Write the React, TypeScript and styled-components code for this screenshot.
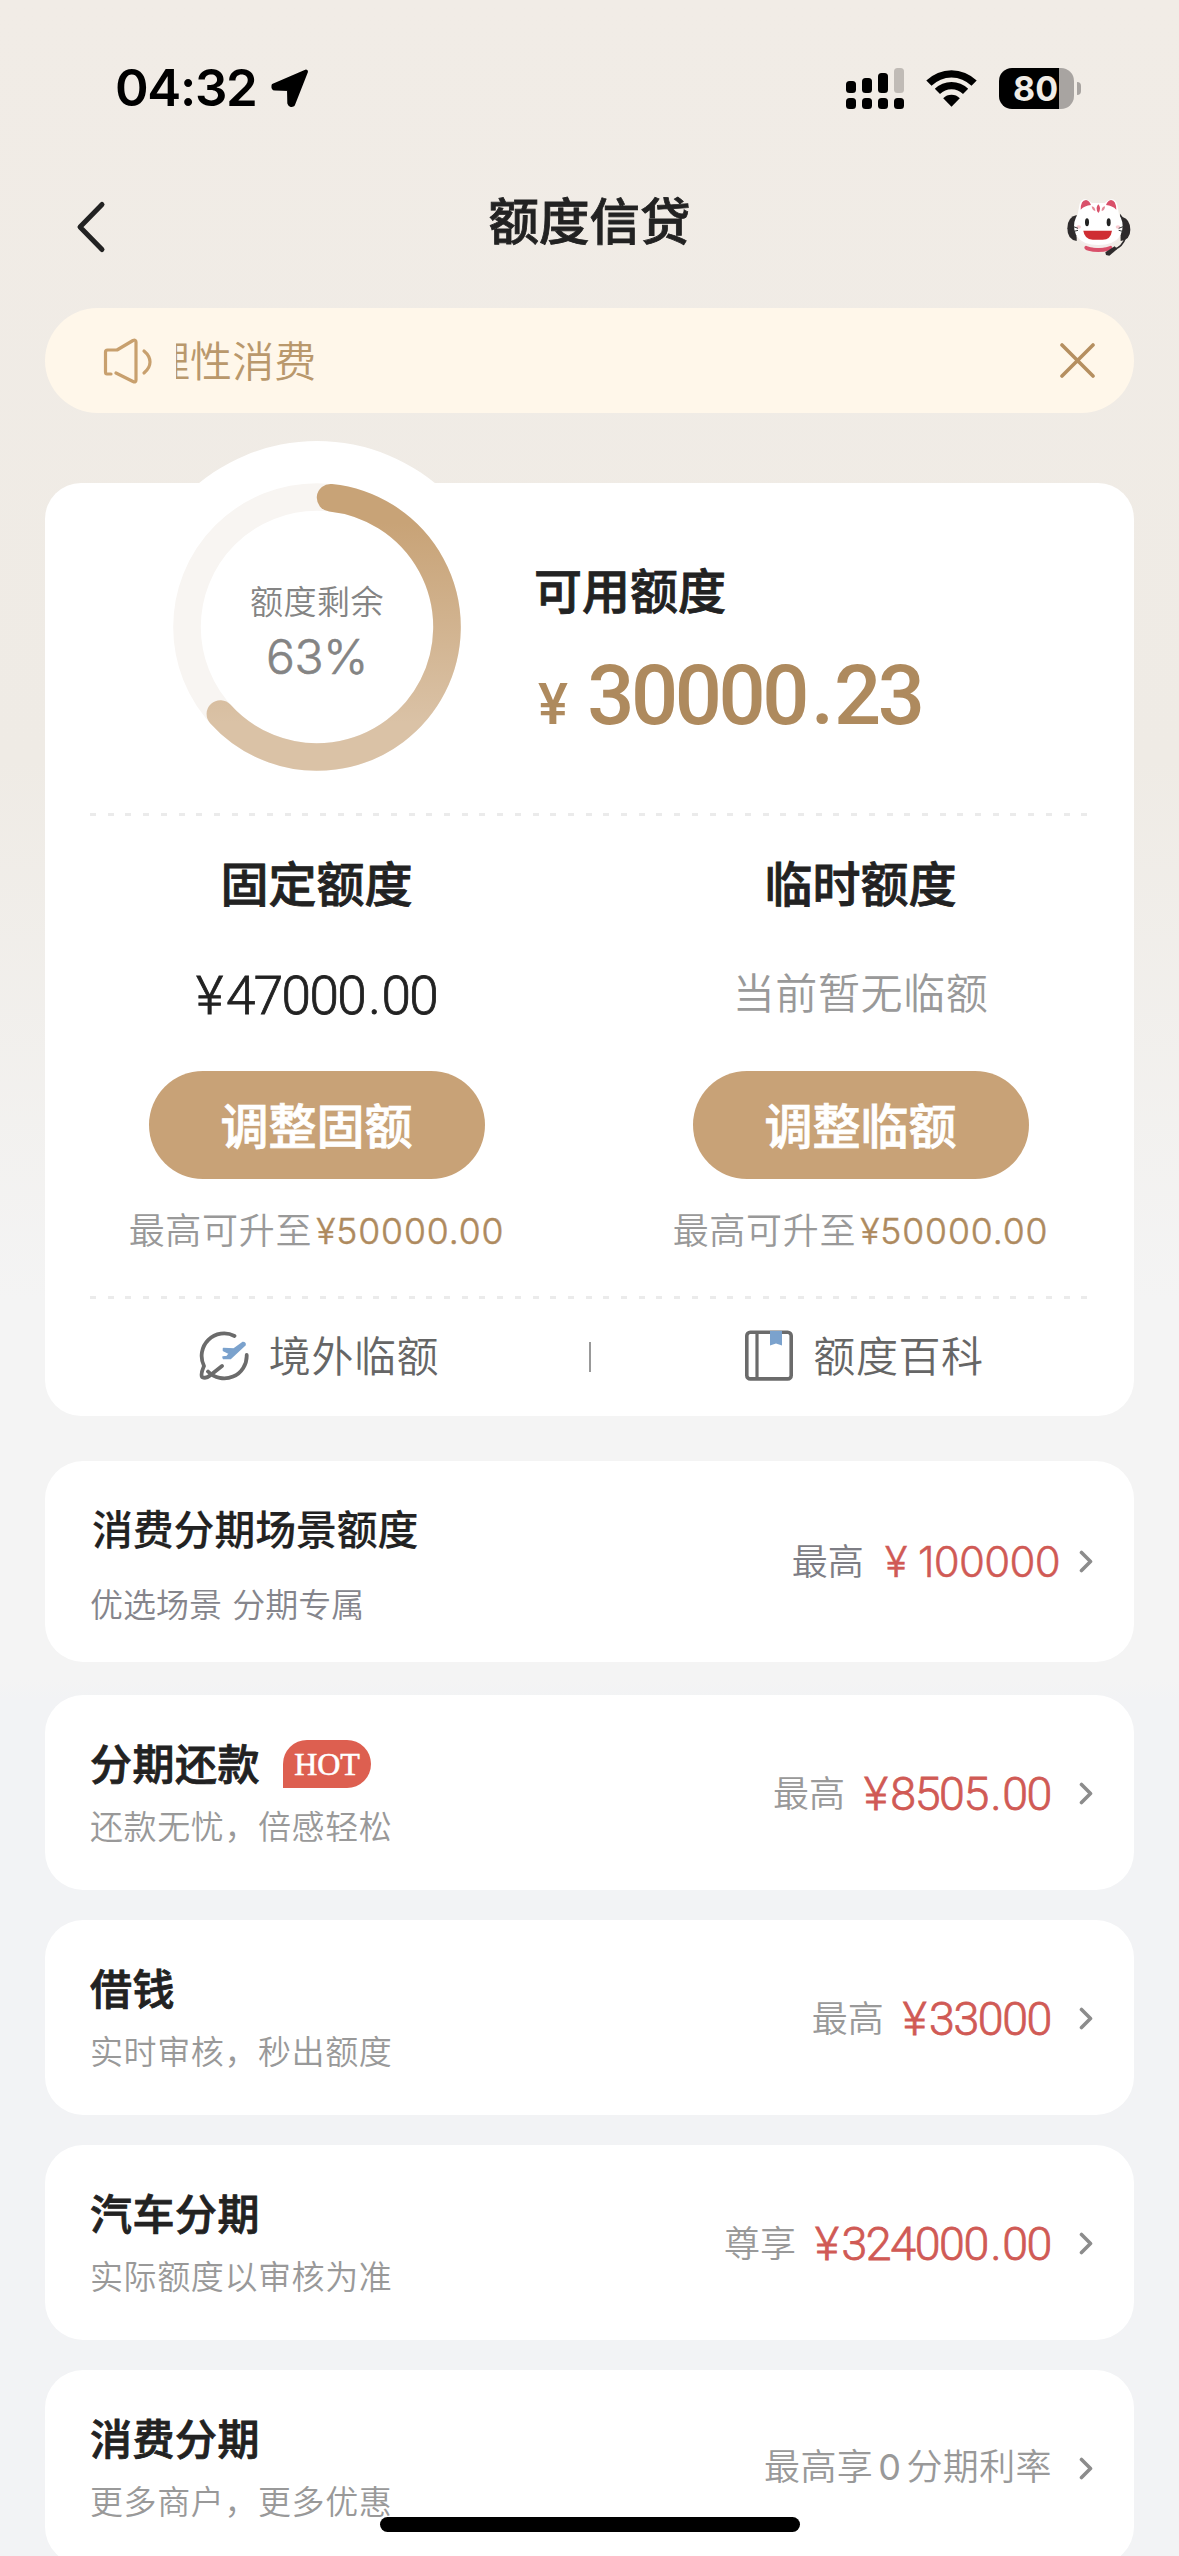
import React from "react";
import styled, { createGlobalStyle } from "styled-components";

const CJK = `"Noto Sans CJK SC", sans-serif`;
const LATIN = `Inter, "Noto Sans CJK SC", sans-serif`;
const DIGIT = `Roboto, "Noto Sans CJK SC", sans-serif`;

const GlobalStyle = createGlobalStyle`
  * { box-sizing: border-box; }
  body { margin: 0; background: #f2f3f5; font-family: ${CJK}; }
  h1, h2, h3, p { margin: 0; font-weight: inherit; }
  button { border: 0; padding: 0; background: none; font-family: inherit; }
  svg { display: block; flex: none; }
`;

const Screen = styled.main`
  position: relative;
  width: 1179px;
  height: 2556px;
  overflow: hidden;
  background: linear-gradient(180deg, #f1ece6 0, #efebe5 760px, #f4f4f4 1300px, #f4f4f4 1680px, #f2f3f5 1700px);
`;

const StatusBar = styled.div`
  height: 176px;
  padding: 0 98px 0 115px;
  display: flex;
  align-items: center;
  justify-content: space-between;
`;

const StatusGroup = styled.div<{ $gap: number }>`
  display: flex;
  align-items: center;
  gap: ${(p) => p.$gap}px;
`;

const Clock = styled.span`
  font: 600 51px/56px ${LATIN};
  letter-spacing: -1.3px;
  color: #000;
`;

const Battery = styled.div`
  display: flex;
  align-items: center;
  gap: 3px;
`;

const BatteryBody = styled.div`
  width: 75px;
  height: 41px;
  padding-left: 14px;
  border-radius: 13px;
  background: linear-gradient(90deg, #000 60px, #a8a4a1 60px);
  color: #f1ece6;
  font: 700 34px/41px ${LATIN};
`;

const BatteryNub = styled.div`
  width: 4px;
  height: 13px;
  border-radius: 0 4px 4px 0;
  background: #a8a4a1;
`;

const NavBar = styled.header`
  height: 102px;
  padding: 0 47px 0 75px;
  display: grid;
  grid-template-columns: 1fr auto 1fr;
  align-items: center;
`;

const NavTitle = styled.h1`
  padding: 0 28px 19px 0;
  font-size: 50.5px;
  line-height: 56px;
  font-weight: 500;
  -webkit-text-stroke: 0.8px currentColor;
  color: #222;
`;

const NavEnd = styled.div`
  justify-self: end;
`;

const Notice = styled.section`
  height: 105px;
  margin: 30px 45px 0;
  padding: 0 39px 0 58px;
  border-radius: 53px;
  background: #fff7ea;
  display: flex;
  align-items: center;
`;

const Marquee = styled.div`
  flex: 1;
  margin-left: 23px;
  overflow: hidden;
`;

const MarqueeText = styled.p`
  margin-left: -28px;
  padding-bottom: 3px;
  font-size: 42px;
  line-height: 56px;
  font-weight: 350;
  letter-spacing: 0.1px;
  color: #b9986c;
`;

const QuotaCard = styled.section`
  height: 933px;
  margin: 70px 45px 0;
  border-radius: 36px;
  background: #fff;
`;

const Hero = styled.div`
  height: 330px;
  padding-left: 86px;
  display: flex;
  align-items: flex-start;
`;

const RingDisc = styled.div`
  width: 372px;
  height: 372px;
  margin-top: -42px;
  border-radius: 50%;
  background: #fff;
  display: grid;
  place-items: center;
  > * { grid-area: 1 / 1; }
`;

const RingLabel = styled.div`
  padding-top: 9px;
  display: flex;
  flex-direction: column;
  align-items: center;
  color: #848484;
`;

const RingCaption = styled.span`
  font-size: 33px;
  line-height: 36px;
  font-weight: 350;
  letter-spacing: 0.5px;
`;

const RingPercent = styled.span`
  margin-top: 15px;
  font: 300 48px/48px ${LATIN};
  letter-spacing: -0.3px;
  -webkit-text-stroke: 0.6px currentColor;
`;

const Available = styled.div`
  padding: 81px 0 0 31px;
`;

const Heading = styled.h2`
  font-size: 48px;
  line-height: 48px;
  font-weight: 500;
  -webkit-text-stroke: 0.8px currentColor;
  color: #222;
`;

const Money = styled.span<{ $size: number; $color?: string; $big?: boolean }>`
  display: inline-flex;
  align-items: baseline;
  font-family: ${DIGIT};
  font-size: ${(p) => p.$size}px;
  font-weight: ${(p) => (p.$big ? 500 : 300)};
  line-height: 1.02;
  letter-spacing: ${(p) => (p.$big ? -0.041 : -0.03)}em;
  -webkit-text-stroke: ${(p) => (p.$big ? 0 : 0.8)}px currentColor;
  color: ${(p) => p.$color ?? "#d05a55"};
`;

const Yen = styled.span<{ $big?: boolean }>`
  font-size: ${(p) => (p.$big ? "0.68em" : "1em")};
  margin-right: ${(p) => (p.$big ? "0.4em" : "0.08em")};
`;

const Point = styled.span`
  padding: 0 0.04em 0 0.06em;
`;

const AvailableAmount = styled.div`
  margin: 42px 0 0 4px;
`;

const Dashes = styled.div`
  height: 3px;
  margin: 0 46px 0 45px;
  background: repeating-linear-gradient(90deg, #ebebeb 0 6px, transparent 6px 17.7px);
`;

const Columns = styled.div`
  display: grid;
  grid-template-columns: 543px 545px;
  height: 480px;
`;

const Column = styled.div`
  padding-top: 41px;
  display: flex;
  flex-direction: column;
  align-items: center;
`;

const ValueBox = styled.div<{ $drop?: boolean }>`
  height: 54px;
  margin-top: 62px;
  padding-top: ${(p) => (p.$drop ? 2 : 0)}px;
`;

const EmptyValue = styled.p`
  font-size: 42px;
  line-height: 48px;
  font-weight: 350;
  letter-spacing: 0.6px;
  color: #999;
`;

const PillButton = styled.button`
  width: 336px;
  height: 108px;
  margin-top: 50px;
  padding-bottom: 4px;
  border-radius: 54px;
  background: #c8a277;
  color: #fff;
  font-size: 48px;
  line-height: 54px;
  font-weight: 500;
  -webkit-text-stroke: 0.8px currentColor;
`;

const UpTo = styled.p`
  margin-top: 31px;
  display: flex;
  align-items: baseline;
  gap: 4px;
  font-size: 36px;
  line-height: 36px;
  font-weight: 350;
  letter-spacing: 0.7px;
  color: #999;
`;

const UpToAmount = styled.span`
  font: 300 35.5px/36px ${LATIN};
  letter-spacing: 0.9px;
  -webkit-text-stroke: 0.5px currentColor;
  color: #ae8a5e;
`;

const Links = styled.nav`
  height: 116px;
  display: grid;
  grid-template-columns: 544px 2px 543px;
  align-items: center;
  justify-items: center;
`;

const LinkItem = styled.div`
  padding: 0 0 3px 4px;
  display: flex;
  align-items: center;
  gap: 20px;
`;

const LinkText = styled.span`
  padding-bottom: 3px;
  font-size: 42px;
  line-height: 48px;
  font-weight: 350;
  letter-spacing: 0.6px;
  color: #666;
`;

const LinkDivider = styled.i`
  width: 2px;
  height: 30px;
  background: #999;
`;

const List = styled.div`
  margin: 45px 45px 0;
  display: flex;
  flex-direction: column;
`;

const Item = styled.article<{ $tall?: boolean }>`
  height: ${(p) => (p.$tall ? 201 : 195)}px;
  margin-bottom: ${(p) => (p.$tall ? 33 : 30)}px;
  padding: 46px 41px 0 45px;
  border-radius: 38px;
  background: #fff;
  display: flex;
  justify-content: space-between;
`;

const ItemTitleRow = styled.div`
  height: 42px;
  display: flex;
  align-items: center;
  gap: 23px;
`;

const ItemTitle = styled.h3<{ $tall?: boolean }>`
  padding-left: ${(p) => (p.$tall ? 2 : 0)}px;
  font-size: ${(p) => (p.$tall ? 40.8 : 42)}px;
  line-height: 42px;
  font-weight: 500;
  letter-spacing: ${(p) => (p.$tall ? 0 : 0.5)}px;
  -webkit-text-stroke: ${(p) => (p.$tall ? 0.2 : 0.8)}px currentColor;
  color: #222;
`;

const HotTag = styled.span`
  width: 88px;
  height: 48px;
  margin-top: 3px;
  border-radius: 24px 24px 24px 0;
  background: #dd5f50;
  color: #fff;
  font: 400 32px/48px "Liberation Serif", serif;
  -webkit-text-stroke: 0.6px currentColor;
  text-align: center;
`;

const ItemNote = styled.p<{ $tall?: boolean }>`
  margin-top: ${(p) => (p.$tall ? 37 : 25)}px;
  font-size: 33px;
  line-height: 34px;
  font-weight: 350;
  letter-spacing: ${(p) => (p.$tall ? 0 : 0.6)}px;
  word-spacing: 3px;
  color: ${(p) => (p.$tall ? "#85858c" : "#999")};
`;

const ItemEnd = styled.div<{ $tall?: boolean }>`
  height: ${(p) => (p.$tall ? 109 : 105)}px;
  display: flex;
  align-items: center;
`;

const ItemLabel = styled.span<{ $tall?: boolean }>`
  padding-bottom: 6px;
  font-size: 36px;
  line-height: 44px;
  font-weight: 350;
  color: ${(p) => (p.$tall ? "#7d7d84" : "#999")};
`;

const ItemAmount = styled.span`
  margin: 0 28px 0 19px;
  padding-top: 3px;
  display: flex;
`;

const SceneAmount = styled.span`
  margin: 0 19px 0 21px;
  font: 300 42px/50px ${LATIN};
  letter-spacing: -0.7px;
  -webkit-text-stroke: 0.5px currentColor;
  color: #d05a55;
`;

const RateText = styled(ItemLabel)`
  margin-right: 27px;
  letter-spacing: 0.4px;
`;

const Zero = styled.span`
  padding: 0 5px;
  font-family: ${LATIN};
  font-weight: 400;
`;

const HomeIndicator = styled.div`
  position: absolute;
  left: 380px;
  bottom: 24px;
  width: 420px;
  height: 15px;
  border-radius: 8px;
  background: #000;
`;

const LocationIcon = () => (
  <svg width="40" height="40" viewBox="0 0 40 40">
    <path d="M36 3.5 L3.5 17.5 Q3 20.5 5 20.6 L19 21 L19.3 35 Q20.5 38 23 36.5 Z" fill="#000" stroke="#000" strokeWidth="4" strokeLinejoin="round" />
  </svg>
);

const SignalIcon = () => (
  <svg width="58" height="41" viewBox="0 0 58 41">
    <rect x="0" y="13" width="10" height="12" rx="3.5" />
    <rect x="16" y="10" width="10" height="15" rx="3.5" />
    <rect x="32" y="5" width="10" height="20" rx="3.5" />
    <rect x="48" y="0" width="10" height="25" rx="3.5" fill="#c0bbb6" />
    {[0, 16, 32, 48].map((x) => (
      <rect key={x} x={x} y="30" width="10" height="11" rx="3.5" />
    ))}
  </svg>
);

const WifiIcon = () => (
  <svg width="51" height="38" viewBox="0 0 51 38">
    <path d="M0.3 11.5 A36 36 0 0 1 50.7 11.5 L45.5 16.7 A28.5 28.5 0 0 0 5.5 16.7 Z" />
    <path d="M8.8 19.8 A24 24 0 0 1 42.2 19.8 L37 25 A16.5 16.5 0 0 0 14 25 Z" />
    <path d="M17.2 29.2 A12 12 0 0 1 33.8 29.2 L25.5 37.8 Z" />
  </svg>
);

const BackIcon = () => (
  <svg width="31" height="54" viewBox="0 0 31 54" fill="none" stroke="#222" strokeWidth="5" strokeLinecap="round" strokeLinejoin="round">
    <path d="M27 4.5 L5 27 L27 49.5" />
  </svg>
);

const CatIcon = () => (
  <svg width="66" height="62" viewBox="860 495 198 186">
    <path d="M892 552 Q864 558 864 592 Q864 626 892 630 Z" fill="#2e2b2c" />
    <path d="M1022 548 L1024 630 Q1053 626 1053 596 Q1053 566 1030 558 Z" fill="#2e2b2c" />
    <ellipse cx="957" cy="650" rx="42" ry="13" fill="#d9506a" />
    <path d="M892 566 L901 518 Q912 492 938 516 L976 516 Q1002 492 1013 518 L1022 566 Z" fill="#fff" />
    <ellipse cx="957" cy="585" rx="73" ry="65" fill="#fff" />
    <path d="M890 614 Q906 650 957 651 Q1008 650 1024 614 Q1003 642 957 642 Q911 642 890 614 Z" fill="#f3ecea" />
    <path d="M904 536 Q904 508 920 507 Q930 509 935 522 Q916 524 904 536 Z" fill="#d9506a" />
    <path d="M1011 536 Q1010 508 995 507 Q985 509 980 522 Q999 524 1011 536 Z" fill="#d9506a" />
    <path d="M957 520 Q968 532 957 546 Q946 532 957 520Z" fill="#d9506a" />
    <path d="M937 526 Q948 528 948 540 Q938 538 937 526Z M977 526 Q966 528 967 540 Q977 538 977 526Z" fill="#e58a98" />
    <ellipse cx="923" cy="574" rx="6" ry="12" fill="#222" />
    <ellipse cx="988" cy="574" rx="6" ry="12" fill="#222" />
    <ellipse cx="898" cy="588" rx="7" ry="5" fill="#f8cdd3" />
    <ellipse cx="1016" cy="588" rx="7" ry="5" fill="#f8cdd3" />
    <path d="M912 599 L998 599 Q994 626 970 626 L940 626 Q915 624 912 599 Z" fill="#cf2d33" />
    <path d="M880 586 L896 592 M880 602 L896 598 M1018 592 L1034 586 M1018 598 L1034 602" stroke="#333" strokeWidth="3" />
    <path d="M1038 620 Q1030 646 1004 656" fill="none" stroke="#2e2b2c" strokeWidth="5" />
    <path d="M978 664 L1006 646 L1014 654 L990 674 L980 672 Z" fill="#2e2b2c" />
  </svg>
);

const SpeakerIcon = () => (
  <svg width="50" height="46" viewBox="0 0 50 46" fill="none" stroke="#c8a06e" strokeWidth="3.2" strokeLinecap="round" strokeLinejoin="round">
    <path d="M8 36 H4 Q2.5 36 2.5 34 V14 Q2.5 12 4.5 12 H14 L30 2.5 Q33 1.5 33 4 V42 Q33 45 30 43.5 L13 35" />
    <path d="M41 13 Q47 18 47 24 Q47 30 41 35" />
  </svg>
);

const CloseIcon = () => (
  <svg width="35" height="35" viewBox="0 0 35 35" stroke="#b58f60" strokeWidth="3.6" strokeLinecap="round">
    <path d="M2 2 L33 33 M33 2 L2 33" />
  </svg>
);

const Ring = () => {
  const r = 130;
  const point = (deg: number) => {
    const a = (deg * Math.PI) / 180;
    return `${144 + r * Math.sin(a)} ${144 - r * Math.cos(a)}`;
  };
  return (
    <svg width="288" height="288" viewBox="0 0 288 288" fill="none" strokeWidth="27.6">
      <defs>
        <linearGradient id="quota" gradientUnits="userSpaceOnUse" x1="0" y1="40" x2="0" y2="240">
          <stop offset="0" stopColor="#c8a377" />
          <stop offset="1" stopColor="#dac2a6" />
        </linearGradient>
      </defs>
      <circle cx="144" cy="144" r={r} stroke="#f8f5f2" />
      <path d={`M${point(6)} A${r} ${r} 0 1 1 ${point(228)}`} stroke="url(#quota)" strokeLinecap="round" />
    </svg>
  );
};

const OverseasIcon = () => (
  <svg width="50" height="50" viewBox="0 0 50 50" fill="none" stroke="#6b6b6b" strokeWidth="3.8" strokeLinecap="round" strokeLinejoin="round">
    <path d="M35.5 5 A22.5 22.5 0 0 0 5 35 Q1.5 43 3 46 Q7 48 11 44.5 L23 35" />
    <path d="M9 40.5 A22.5 22.5 0 0 0 47.7 24" />
    <path d="M44 11.5 L35 18 L24.5 17.5 L24.5 19.5 L30.5 22.5 L28 25.5 L24 26 L24.5 27.5 L31.5 27.5 L46 14 Q46.5 11.5 44 11.5 Z" fill="#7ba2cd" stroke="#7ba2cd" strokeWidth="1.6" />
  </svg>
);

const BookIcon = () => (
  <svg width="48" height="51" viewBox="0 0 48 51">
    <rect x="1.8" y="2.3" width="44.4" height="46.6" rx="3.5" fill="none" stroke="#6b6b6b" strokeWidth="3.6" />
    <path d="M12 3 V49" stroke="#6b6b6b" strokeWidth="3.2" />
    <path d="M25 1 H37 V15.5 L31 13.5 L25 15.5 Z" fill="#7ba2cd" />
  </svg>
);

const ChevronIcon = () => (
  <svg width="14" height="23" viewBox="0 0 14 23" fill="none" stroke="#8c8c8c" strokeWidth="3.6" strokeLinecap="round" strokeLinejoin="round">
    <path d="M2.5 2.5 L11.5 11.5 L2.5 20.5" />
  </svg>
);

type AmountProps = { value: string; size: number; color?: string; big?: boolean };

const Amount = ({ value, size, color, big }: AmountProps) => {
  const [whole, cents] = value.split(".");
  return (
    <Money $size={size} $color={color} $big={big}>
      <Yen $big={big}>¥</Yen>
      {whole}
      {cents && (
        <>
          <Point>.</Point>
          {cents}
        </>
      )}
    </Money>
  );
};

type Entry = { title: string; note: string; label: string; amount: string; hot?: boolean };

const entries: Entry[] = [
  { title: "分期还款", note: "还款无忧，倍感轻松", label: "最高", amount: "8505.00", hot: true },
  { title: "借钱", note: "实时审核，秒出额度", label: "最高", amount: "33000" },
  { title: "汽车分期", note: "实际额度以审核为准", label: "尊享", amount: "324000.00" },
];

export default function App() {
  return (
    <>
      <GlobalStyle />
      <Screen>
        <StatusBar>
          <StatusGroup $gap={13}>
            <Clock>04:32</Clock>
            <LocationIcon />
          </StatusGroup>
          <StatusGroup $gap={22}>
            <SignalIcon />
            <WifiIcon />
            <Battery>
              <BatteryBody>80</BatteryBody>
              <BatteryNub />
            </Battery>
          </StatusGroup>
        </StatusBar>
        <NavBar>
          <BackIcon />
          <NavTitle>额度信贷</NavTitle>
          <NavEnd>
            <CatIcon />
          </NavEnd>
        </NavBar>
        <Notice>
          <SpeakerIcon />
          <Marquee>
            <MarqueeText>理性消费</MarqueeText>
          </Marquee>
          <CloseIcon />
        </Notice>

        <QuotaCard>
          <Hero>
            <RingDisc>
              <Ring />
              <RingLabel>
                <RingCaption>额度剩余</RingCaption>
                <RingPercent>63%</RingPercent>
              </RingLabel>
            </RingDisc>
            <Available>
              <Heading>可用额度</Heading>
              <AvailableAmount>
                <Amount value="30000.23" size={83} color="#ae8a5e" big />
              </AvailableAmount>
            </Available>
          </Hero>
          <Dashes />
          <Columns>
            <Column>
              <Heading>固定额度</Heading>
              <ValueBox $drop>
                <Amount value="47000.00" size={53} color="#222" />
              </ValueBox>
              <PillButton>调整固额</PillButton>
              <UpTo>
                最高可升至<UpToAmount>¥50000.00</UpToAmount>
              </UpTo>
            </Column>
            <Column>
              <Heading>临时额度</Heading>
              <ValueBox>
                <EmptyValue>当前暂无临额</EmptyValue>
              </ValueBox>
              <PillButton>调整临额</PillButton>
              <UpTo>
                最高可升至<UpToAmount>¥50000.00</UpToAmount>
              </UpTo>
            </Column>
          </Columns>
          <Dashes />
          <Links>
            <LinkItem>
              <OverseasIcon />
              <LinkText>境外临额</LinkText>
            </LinkItem>
            <LinkDivider />
            <LinkItem>
              <BookIcon />
              <LinkText>额度百科</LinkText>
            </LinkItem>
          </Links>
        </QuotaCard>

        <List>
          <Item $tall>
            <div>
              <ItemTitleRow>
                <ItemTitle $tall>消费分期场景额度</ItemTitle>
              </ItemTitleRow>
              <ItemNote $tall>优选场景 分期专属</ItemNote>
            </div>
            <ItemEnd $tall>
              <ItemLabel $tall>最高</ItemLabel>
              <SceneAmount>¥ 100000</SceneAmount>
              <ChevronIcon />
            </ItemEnd>
          </Item>
          {entries.map((e) => (
            <Item key={e.title}>
              <div>
                <ItemTitleRow>
                  <ItemTitle>{e.title}</ItemTitle>
                  {e.hot && <HotTag>HOT</HotTag>}
                </ItemTitleRow>
                <ItemNote>{e.note}</ItemNote>
              </div>
              <ItemEnd>
                <ItemLabel>{e.label}</ItemLabel>
                <ItemAmount>
                  <Amount value={e.amount} size={46.5} />
                </ItemAmount>
                <ChevronIcon />
              </ItemEnd>
            </Item>
          ))}
          <Item>
            <div>
              <ItemTitleRow>
                <ItemTitle>消费分期</ItemTitle>
              </ItemTitleRow>
              <ItemNote>更多商户，更多优惠</ItemNote>
            </div>
            <ItemEnd>
              <RateText>
                最高享<Zero>0</Zero>分期利率
              </RateText>
              <ChevronIcon />
            </ItemEnd>
          </Item>
        </List>
        <HomeIndicator />
      </Screen>
    </>
  );
}
